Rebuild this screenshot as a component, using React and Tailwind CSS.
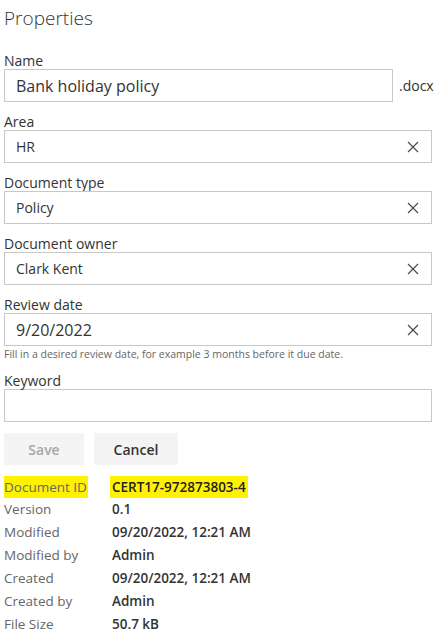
import React from "react";

function ClearIcon() {
  return (
    <svg width="12" height="12" viewBox="0 0 12 12" className="shrink-0">
      <path d="M1 1 L11 11 M11 1 L1 11" stroke="#444" strokeWidth="1.1" fill="none" />
    </svg>
  );
}

function Field({ label, value, big, clear = true, suffix, hint }) {
  return (
    <div className="mb-[12px]">
      <label className="block text-[14px] leading-4 text-[#333]">{label}</label>
      <div className="flex items-center">
        <div className="flex h-[33px] flex-1 items-center border border-[#c8c8c8] bg-white pl-[11px] pr-[12px]">
          <span className={`flex-1 text-[#333] ${big ? "text-[16px]" : "text-[14px]"}`}>
            {value}
          </span>
          {clear && <ClearIcon />}
        </div>
        {suffix && <span className="w-[39px] pl-[6px] text-[14px] text-[#333]">{suffix}</span>}
      </div>
      {hint && (
        <p className="mt-[1px] text-[10.5px] leading-[14px] text-[#666]">{hint}</p>
      )}
    </div>
  );
}

const meta = [
  ["Version", "0.1"],
  ["Modified", "09/20/2022, 12:21 AM"],
  ["Modified by", "Admin"],
  ["Created", "09/20/2022, 12:21 AM"],
  ["Created by", "Admin"],
  ["File Size", "50.7 kB"],
];

export default function App() {
  return (
    <div
      className="min-h-screen w-[438px] bg-white pl-[4px] pr-[6px] pt-[4px] text-[#333]"
      style={{ fontFamily: '"Segoe UI", "Open Sans", sans-serif' }}
    >
      <h1 className="mb-[21px] text-[19px] font-light leading-7 text-[#333]">Properties</h1>

      <Field label="Name" value="Bank holiday policy" big clear={false} suffix=".docx" />
      <Field label="Area" value="HR" />
      <Field label="Document type" value="Policy" />
      <Field label="Document owner" value="Clark Kent" />
      <Field
        label="Review date"
        value="9/20/2022"
        big
        hint="Fill in a desired review date, for example 3 months before it due date."
      />
      <div className="mb-[11px]">
        <label className="block text-[14px] leading-4 text-[#333]">Keyword</label>
        <div className="h-[33px] border border-[#c8c8c8] bg-white" />
      </div>

      <div className="mb-[10px] flex gap-[10px]">
        <button
          type="button"
          className="h-[32px] w-[80px] bg-[#f4f4f4] text-[14px] font-semibold text-[#a6a6a6]"
        >
          Save
        </button>
        <button
          type="button"
          className="h-[32px] w-[84px] bg-[#f4f4f4] text-[14px] font-semibold text-[#333]"
        >
          Cancel
        </button>
      </div>

      <div className="text-[13.5px]">
        <div className="flex h-[23px] items-center">
          <div className="w-[108px]">
            <span className="inline-block h-[22px] whitespace-nowrap bg-[#fff200] pr-[1px] leading-[22px] text-[#666]">
              Document ID
            </span>
          </div>
          <span className="-ml-[2px] inline-block h-[22px] whitespace-nowrap bg-[#fff200] px-[2px] font-semibold leading-[22px] text-[#222]">
            CERT17-972873803-4
          </span>
        </div>
        {meta.map(([k, v]) => (
          <div key={k} className="flex h-[23px] items-center">
            <span className="w-[108px] text-[#666]">{k}</span>
            <span className="font-semibold text-[#333]">{v}</span>
          </div>
        ))}
      </div>
    </div>
  );
}
